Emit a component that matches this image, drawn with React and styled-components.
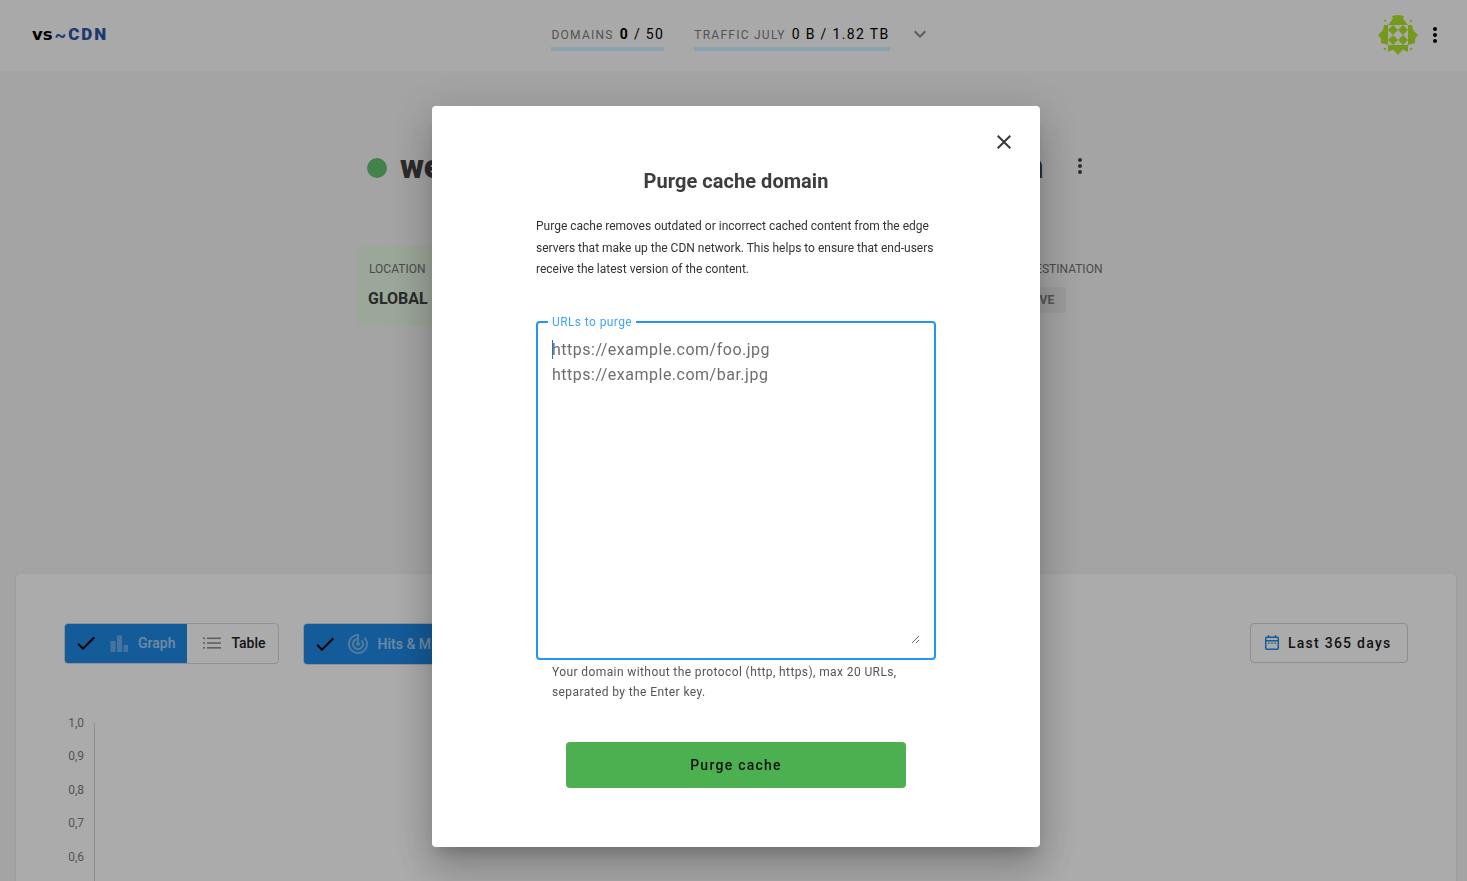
import React from 'react';
import styled, { createGlobalStyle } from 'styled-components';

const GlobalStyle = createGlobalStyle`
  html, body {
    margin: 0;
    height: 100%;
    overflow: hidden;
    background: #f5f5f5;
    font-family: Roboto, 'Liberation Sans', sans-serif;
  }
  * { box-sizing: border-box; }
`;

const Page = styled.div`
  height: 881px;
  overflow: hidden;
`;

const Header = styled.header`
  height: 71px;
  background: #fcfcfc;
  padding: 0 20px 1px 32px;
  display: flex;
  align-items: center;
  justify-content: space-between;
`;

const Logo = styled.div`
  display: flex;
  align-items: center;
  height: 24px;
  margin-bottom: 2px;
`;

const LogoVs = styled.span`
  font-family: 'DejaVu Sans', sans-serif;
  font-weight: 700;
  font-size: 16.5px;
  color: #000;
`;

const LogoTilde = styled.span`
  font-family: Roboto, sans-serif;
  font-weight: 700;
  font-size: 18px;
  color: #2e5eb6;
  margin: 0 2px 0 2px;
`;

const LogoCdn = styled.span`
  font-weight: 900;
  font-size: 17px;
  letter-spacing: 1.9px;
  color: #2a55a5;
`;

const Stats = styled.div`
  display: flex;
  align-items: center;
  margin-right: 3px;
`;

const Stat = styled.div`
  display: flex;
  align-items: baseline;
  gap: 6px;
  height: 30px;
  margin-top: 2px;
  padding-top: 5px;
  margin-right: ${(p) => p.$gap}px;
  border-bottom: 4px solid #cdf0ff;
`;

const StatLabel = styled.span`
  font-size: 12px;
  letter-spacing: 1.25px;
  color: #7d7d7d;
`;

const StatValue = styled.span`
  font-size: 14px;
  font-weight: 400;
  letter-spacing: 1.35px;
  color: #000;
`;

const StatStrong = styled.b`
  font-weight: 700;
`;

const Chevron = styled.svg`
  width: 24px;
  height: 24px;
  margin-bottom: 2px;
  fill: #8a8a8a;
`;

const HeaderRight = styled.div`
  display: flex;
  align-items: center;
  gap: 5px;
`;

const Avatar = styled.svg`
  width: 40px;
  height: 40px;
  display: block;
`;

const MoreIcon = styled.svg`
  width: 24px;
  height: 24px;
  display: block;
  fill: ${(p) => p.$color};
`;

const TitleRow = styled.div`
  width: 733px;
  height: 40px;
  margin: 76px auto 0;
  display: flex;
  align-items: center;
  justify-content: space-between;
`;

const TitleGroup = styled.div`
  display: flex;
  align-items: center;
  gap: 13px;
`;

const StatusDot = styled.span`
  width: 20px;
  height: 20px;
  border-radius: 50%;
  background: #66c270;
  margin-top: 2px;
`;

const Title = styled.h1`
  margin: 0;
  font-size: 33px;
  line-height: 40px;
  font-weight: 900;
  letter-spacing: -0.1px;
  color: #404040;
  white-space: nowrap;
`;

const MoreButton = styled.div`
  width: 40px;
  height: 40px;
  margin-bottom: 2px;
  display: flex;
  align-items: center;
  justify-content: center;
`;

const InfoRow = styled.div`
  width: 752px;
  height: 80px;
  margin: 59px 0 0 356px;
  display: flex;
  justify-content: space-between;
`;

const LocationCard = styled.div`
  width: 100px;
  padding: 16px 12px;
  background: #e7f9e3;
  border-radius: 3px;
`;

const InfoCell = styled.div`
  width: 108px;
  padding-top: 16px;
`;

const InfoLabel = styled.div`
  font-size: 12px;
  line-height: 14px;
  color: #707070;
  margin-left: ${(p) => p.$indent || 0}px;
  white-space: nowrap;
`;

const InfoValue = styled.div`
  font-size: 16px;
  font-weight: 700;
  line-height: 20px;
  margin-top: 12.5px;
  color: #404040;
`;

const Chip = styled.span`
  display: inline-block;
  margin: 11px 0 0 2px;
  height: 26px;
  line-height: 26px;
  padding: 0 12px 0 11px;
  font-size: 12px;
  font-weight: 700;
  color: #808080;
  background: #e8e8e8;
  border-radius: 3px;
`;

const ChartCard = styled.section`
  margin: 248px 11px 0 16px;
  height: 400px;
  padding: 49px 48px 0 48px;
  background: #fff;
  border-radius: 4px;
  box-shadow: 0 1px 3px rgba(0, 0, 0, 0.12);
`;

const Toolbar = styled.div`
  display: flex;
  align-items: flex-start;
  justify-content: space-between;
`;

const ToolGroup = styled.div`
  display: flex;
  gap: 24px;
`;

const Toggle = styled.div`
  display: flex;
  height: ${(p) => p.$height}px;
  border: 1px solid #d8d8d8;
  border-radius: 4px;
  overflow: hidden;
`;

const ToggleItem = styled.div`
  display: flex;
  align-items: center;
  padding: 0 12px ${(p) => (p.$lift ? 2 : 0)}px ${(p) => (p.$active ? 9 : 13)}px;
  gap: ${(p) => (p.$active ? 0 : 7)}px;
  background: ${(p) => (p.$active ? '#1e88e5' : 'transparent')};
  font-size: 14px;
  font-weight: 500;
  color: ${(p) => (p.$active ? 'rgba(255,255,255,0.62)' : '#222')};
  white-space: nowrap;
`;

const CheckIcon = styled.svg`
  width: 24px;
  height: 24px;
  fill: #000;
  margin-right: ${(p) => p.$gap}px;
  flex: none;
`;

const GlyphIcon = styled.svg`
  width: 24px;
  height: 24px;
  flex: none;
  margin-right: ${(p) => p.$gap || 0}px;
`;

const RangeButton = styled.div`
  width: 158px;
  height: 40px;
  display: flex;
  align-items: center;
  gap: 7px;
  padding-left: 12px;
  border: 1px solid #d4d4d4;
  border-radius: 4px;
  font-size: 14px;
  font-weight: 500;
  letter-spacing: 1.25px;
  color: #1a1a1a;
`;

const CalendarIcon = styled.svg`
  width: 18px;
  height: 18px;
  flex: none;
`;

const Chart = styled.div`
  display: flex;
  margin-top: 41.6px;
`;

const Ticks = styled.div`
  width: 20px;
  margin-right: 10px;
  text-align: right;
`;

const Tick = styled.div`
  height: 33.5px;
  line-height: 33.5px;
  font-size: 12px;
  color: #7d7d7d;
`;

const Axis = styled.div`
  width: 1px;
  height: 200px;
  margin-top: 16.4px;
  background: #d6d6d6;
`;

const Backdrop = styled.div`
  position: fixed;
  inset: 0;
  background: rgba(0, 0, 0, 0.33);
  display: flex;
  justify-content: center;
  align-items: flex-start;
  padding: 106px 0 0 5px;
`;

const Dialog = styled.div`
  position: relative;
  width: 608px;
  padding: 61px 104px 59px;
  background: #fff;
  border-radius: 4px;
  box-shadow: 0 11px 15px -7px rgba(0, 0, 0, 0.2),
    0 24px 38px 3px rgba(0, 0, 0, 0.14), 0 9px 46px 8px rgba(0, 0, 0, 0.12);
`;

const CloseButton = styled.div`
  position: absolute;
  top: 18px;
  right: 18.5px;
  width: 36px;
  height: 36px;
  display: flex;
  align-items: center;
  justify-content: center;
`;

const CloseIcon = styled.svg`
  width: 24px;
  height: 24px;
  fill: #3a3a3a;
`;

const DialogTitle = styled.h2`
  margin: 0;
  font-size: 20px;
  line-height: 28px;
  font-weight: 700;
  letter-spacing: 0.05px;
  text-align: center;
  color: #3d3d3d;
`;

const DialogText = styled.p`
  margin: 21px 0 0;
  font-size: 12px;
  line-height: 21.5px;
  color: #333;
`;

const Field = styled.fieldset`
  margin: 34px 0 0;
  padding: 0 14px 14px;
  min-width: 0;
  border: 2px solid #2196f3;
  border-radius: 4px;
`;

const FieldLegend = styled.legend`
  margin-left: -4px;
  padding: 0 4px;
  font-size: 12px;
  line-height: 15px;
  letter-spacing: 0.4px;
  color: #42a5f5;
`;

const AreaWrap = styled.div`
  position: relative;
  margin-top: 7px;
`;

const Caret = styled.span`
  position: absolute;
  top: 3px;
  left: 0;
  width: 1px;
  height: 19px;
  background: #1976d2;
`;

const UrlArea = styled.textarea`
  display: block;
  width: 100%;
  height: 307px;
  padding: 0;
  border: 0;
  outline: 0;
  resize: vertical;
  background: transparent;
  font-family: Roboto, sans-serif;
  font-size: 16px;
  line-height: 25px;
  letter-spacing: 0.5px;
  color: #333;
  caret-color: transparent;

  &::placeholder {
    color: #6e6e6e;
    opacity: 1;
  }
`;

const Helper = styled.div`
  margin-top: 2px;
  padding-left: 16px;
  font-size: 12px;
  line-height: 20px;
  letter-spacing: 0.4px;
  color: #555;
`;

const PurgeButton = styled.button`
  display: block;
  width: 340px;
  height: 46px;
  margin: 40px auto 0;
  border: 0;
  border-radius: 4px;
  background: #4caf50;
  font-family: Roboto, sans-serif;
  font-size: 14px;
  font-weight: 500;
  letter-spacing: 1.25px;
  color: #111;
`;

const CHECK = 'M9 16.17L4.83 12l-1.42 1.41L9 19 21 7l-1.41-1.41z';
const MORE =
  'M12 8c1.1 0 2-.9 2-2s-.9-2-2-2-2 .9-2 2 .9 2 2 2zm0 2c-1.1 0-2 .9-2 2s.9 2 2 2 2-.9 2-2-.9-2-2-2zm0 6c-1.1 0-2 .9-2 2s.9 2 2 2 2-.9 2-2-.9-2-2-2z';
const TRACK =
  'M19.07 4.93l-1.41 1.41C19.1 7.79 20 9.79 20 12c0 4.42-3.58 8-8 8s-8-3.58-8-8c0-4.08 3.05-7.44 7-7.93v2.02C8.16 6.57 6 9.03 6 12c0 3.31 2.69 6 6 6s6-2.69 6-6c0-1.66-.67-3.16-1.76-4.24l-1.41 1.41C15.55 9.9 16 10.9 16 12c0 2.21-1.79 4-4 4s-4-1.79-4-4c0-1.86 1.28-3.41 3-3.86v2.14c-.6.35-1 .98-1 1.72 0 1.1.9 2 2 2s2-.9 2-2c0-.74-.4-1.38-1-1.72V2h-1C6.48 2 2 6.48 2 12s4.48 10 10 10 10-4.48 10-10c0-2.76-1.12-5.26-2.93-7.07z';

function Identicon() {
  return (
    <Avatar viewBox="0 0 40 40">
      <defs>
        <clipPath id="avatarClip">
          <circle cx="20" cy="20" r="20" />
        </clipPath>
      </defs>
      <g clipPath="url(#avatarClip)" fill="#afe52a">
        <polygon points="13,0 27,0 25,3 26,5 30,10 10,10 14,5 15,3" />
        <polygon points="10,10 6,10 5,15 0,20 3,24 3,28 10,30" />
        <polygon points="30,10 34,10 35,15 40,20 37,24 37,28 30,30" />
        <polygon points="10,30 30,30 30,37 25,34.5 20,40 15,34.5 10,37" />
        <polygon points="15,10 20,15 15,20 10,15" />
        <polygon points="25,10 30,15 25,20 20,15" />
        <polygon points="15,20 20,25 15,30 10,25" />
        <polygon points="25,20 30,25 25,30 20,25" />
        <polygon points="5,6 8,4 8,7" />
        <polygon points="35,6 32,4 32,7" />
        <polygon points="5,33 8,33 8,36" />
        <polygon points="35,33 32,33 32,36" />
      </g>
    </Avatar>
  );
}

function BarsIcon() {
  return (
    <GlyphIcon viewBox="0 0 24 24" $gap={8}>
      <g fill="rgba(255,255,255,0.32)">
        <rect x="4.5" y="10" width="5" height="11" />
        <rect x="11" y="4.5" width="5" height="16.5" />
        <rect x="17.5" y="14" width="4.5" height="7" />
      </g>
    </GlyphIcon>
  );
}

function ListIcon() {
  return (
    <GlyphIcon viewBox="0 0 24 24">
      <g fill="#8f8f8f">
        <rect x="3" y="6.5" width="2" height="1.6" />
        <rect x="3" y="11.2" width="2" height="1.6" />
        <rect x="3" y="16" width="2" height="1.6" />
        <rect x="7" y="6.5" width="14" height="1.6" />
        <rect x="7" y="11.2" width="14" height="1.6" />
        <rect x="7" y="16" width="14" height="1.6" />
      </g>
    </GlyphIcon>
  );
}

function RadarIcon() {
  return (
    <GlyphIcon viewBox="0 0 24 24" $gap={8}>
      <path d={TRACK} fill="rgba(255,255,255,0.4)" />
    </GlyphIcon>
  );
}

function Calendar() {
  return (
    <CalendarIcon viewBox="0 0 18 18">
      <g fill="none" stroke="#1e88e5" strokeWidth="1.5">
        <rect x="2.75" y="3.25" width="12.5" height="12" rx="1" />
        <path d="M2.75 6.75h12.5M5.5 1.2v2.4M12.5 1.2v2.4" />
      </g>
      <g fill="#1e88e5">
        <rect x="5" y="8.5" width="1.6" height="1.4" />
        <rect x="8.2" y="8.5" width="1.6" height="1.4" />
        <rect x="11.4" y="8.5" width="1.6" height="1.4" />
      </g>
    </CalendarIcon>
  );
}

const TICKS = ['1,0', '0,9', '0,8', '0,7', '0,6'];

export default function App() {
  return (
    <>
      <GlobalStyle />
      <Page>
        <Header>
          <Logo>
            <LogoVs>vs</LogoVs>
            <LogoTilde>~</LogoTilde>
            <LogoCdn>CDN</LogoCdn>
          </Logo>
          <Stats>
            <Stat $gap={30}>
              <StatLabel>DOMAINS</StatLabel>
              <StatValue>
                <StatStrong>0</StatStrong> / 50
              </StatValue>
            </Stat>
            <Stat $gap={18}>
              <StatLabel>TRAFFIC JULY</StatLabel>
              <StatValue>0 B / 1.82 TB</StatValue>
            </Stat>
            <Chevron viewBox="0 0 24 24">
              <path d="M16.59 8.59L12 13.17 7.41 8.59 6 10l6 6 6-6z" />
            </Chevron>
          </Stats>
          <HeaderRight>
            <Identicon />
            <MoreIcon viewBox="0 0 24 24" $color="#000">
              <path d={MORE} />
            </MoreIcon>
          </HeaderRight>
        </Header>

        <TitleRow>
          <TitleGroup>
            <StatusDot />
            <Title>website-cdn-distribution-main-domain-ion</Title>
          </TitleGroup>
          <MoreButton>
            <MoreIcon viewBox="0 0 24 24" $color="#444">
              <path d={MORE} />
            </MoreIcon>
          </MoreButton>
        </TitleRow>

        <InfoRow>
          <LocationCard>
            <InfoLabel $indent={1}>LOCATION</InfoLabel>
            <InfoValue>GLOBAL</InfoValue>
          </LocationCard>
          <InfoCell>
            <InfoLabel>CDN DESTINATION</InfoLabel>
            <Chip>ACTIVE</Chip>
          </InfoCell>
        </InfoRow>

        <ChartCard>
          <Toolbar>
            <ToolGroup>
              <Toggle $height={41}>
                <ToggleItem $active $lift>
                  <CheckIcon viewBox="0 0 24 24" $gap={8}>
                    <path d={CHECK} />
                  </CheckIcon>
                  <BarsIcon />
                  Graph
                </ToggleItem>
                <ToggleItem $lift>
                  <ListIcon />
                  Table
                </ToggleItem>
              </Toggle>
              <Toggle $height={42}>
                <ToggleItem $active>
                  <CheckIcon viewBox="0 0 24 24" $gap={9}>
                    <path d={CHECK} />
                  </CheckIcon>
                  <RadarIcon />
                  Hits &amp; Misses
                </ToggleItem>
              </Toggle>
            </ToolGroup>
            <RangeButton>
              <Calendar />
              Last 365 days
            </RangeButton>
          </Toolbar>
          <Chart>
            <Ticks>
              {TICKS.map((t) => (
                <Tick key={t}>{t}</Tick>
              ))}
            </Ticks>
            <Axis />
          </Chart>
        </ChartCard>
      </Page>

      <Backdrop>
        <Dialog>
          <CloseButton>
            <CloseIcon viewBox="0 0 24 24">
              <path d="M19 6.41L17.59 5 12 10.59 6.41 5 5 6.41 10.59 12 5 17.59 6.41 19 12 13.41 17.59 19 19 17.59 13.41 12z" />
            </CloseIcon>
          </CloseButton>
          <DialogTitle>Purge cache domain</DialogTitle>
          <DialogText>
            Purge cache removes outdated or incorrect cached content from the
            edge servers that make up the CDN network. This helps to ensure that
            end-users receive the latest version of the content.
          </DialogText>
          <Field>
            <FieldLegend>URLs to purge</FieldLegend>
            <AreaWrap>
              <UrlArea
                placeholder={'https://example.com/foo.jpg\nhttps://example.com/bar.jpg'}
              />
              <Caret />
            </AreaWrap>
          </Field>
          <Helper>
            Your domain without the protocol (http, https), max 20 URLs,
            separated by the Enter key.
          </Helper>
          <PurgeButton>Purge cache</PurgeButton>
        </Dialog>
      </Backdrop>
    </>
  );
}
